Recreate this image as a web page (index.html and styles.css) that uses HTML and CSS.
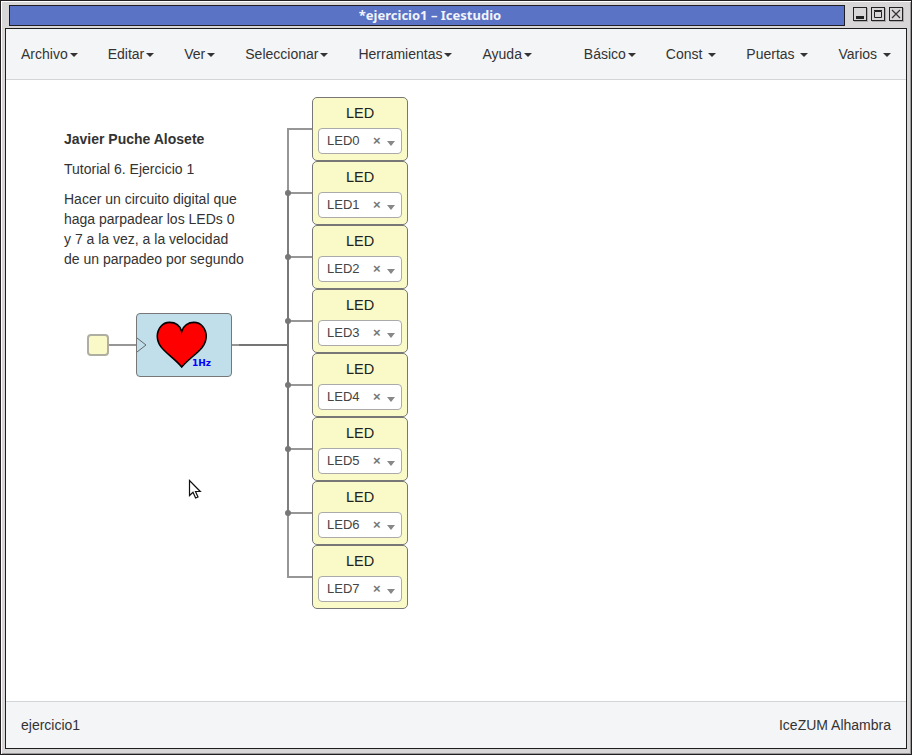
FILE: index.html
```html
<!DOCTYPE html>
<html lang="es">
<head>
<meta charset="utf-8">
<title>*ejercicio1 – Icestudio</title>
<link rel="stylesheet" href="styles.css">
</head>
<body>
<div class="window">
  <header class="titlebar">
    <div class="title">*ejercicio1 – Icestudio</div>
    <div class="controls">
      <svg class="control" viewBox="0 0 14 14"><path d="M3 9h8v3H3z" fill="#222"/></svg>
      <svg class="control" viewBox="0 0 14 14"><path d="M3.5 4.5h7v6h-7zM3 3.5h8" fill="none" stroke="#222"/></svg>
      <svg class="control" viewBox="0 0 14 14"><path d="M3 3l8 8M11 3l-8 8" fill="none" stroke="#333" stroke-width="1.2"/></svg>
    </div>
  </header>
  <div class="client">
    <nav class="navbar">
      <div class="menu">
        <a>Archivo<i class="caret"></i></a><a>Editar<i class="caret"></i></a><a>Ver<i class="caret"></i></a><a>Seleccionar<i class="caret"></i></a><a>Herramientas<i class="caret"></i></a><a>Ayuda<i class="caret"></i></a>
      </div>
      <div class="menu">
        <a>Básico<i class="caret"></i></a><a>Const <i class="caret"></i></a><a>Puertas <i class="caret"></i></a><a>Varios <i class="caret"></i></a>
      </div>
    </nav>
    <main class="canvas">
      <svg class="wires" width="900" height="621" viewBox="6 80 900 621">
        <g fill="none" stroke="#777" stroke-width="2" stroke-opacity=".77">
          <path d="M108 345H136M232 345H240"/>
          <path d="M239 345H288V129H312"/>
          <path d="M239 345H288V193H312"/>
          <path d="M239 345H288V257H312"/>
          <path d="M239 345H288V321H312"/>
          <path d="M239 345H288V385H312"/>
          <path d="M239 345H288V449H312"/>
          <path d="M239 345H288V513H312"/>
          <path d="M239 345H288V577H312"/>
        </g>
        <g fill="#777">
          <circle cx="288" cy="193" r="3"/><circle cx="288" cy="257" r="3"/><circle cx="288" cy="321" r="3"/><circle cx="288" cy="385" r="3"/><circle cx="288" cy="449" r="3"/><circle cx="288" cy="513" r="3"/>
        </g>
      </svg>
      <div class="note">
        <p><strong>Javier Puche Alosete</strong></p>
        <p>Tutorial 6. Ejercicio 1</p>
        <p>Hacer un circuito digital que haga parpadear los LEDs 0 y 7 a la vez, a la velocidad de un parpadeo por segundo</p>
      </div>
      <div class="clock-input"></div>
      <div class="heart">
        <svg width="94" height="62" viewBox="137 314 94 62">
          <path d="M137 338L146 345L137 352" fill="none" stroke="#666"/>
          <path d="M181.7 331.5C180 325.5 175 322.4 169.5 322.4C162.5 322.4 157.3 328.5 157.3 336.5C157.3 349 171 354.5 181.7 367C192.5 354.5 206.2 349 206.2 336.5C206.2 328.5 201 322.4 194 322.4C188.5 322.4 183.4 325.5 181.7 331.5Z" fill="#f00" stroke="#000" stroke-width="1.6"/>
          <text class="rate" x="192" y="366">1Hz</text>
        </svg>
      </div>
      <div class="leds">
        <section class="led"><h3>LED</h3><div class="select"><span>LED0</span><b>×</b><i></i></div></section>
        <section class="led"><h3>LED</h3><div class="select"><span>LED1</span><b>×</b><i></i></div></section>
        <section class="led"><h3>LED</h3><div class="select"><span>LED2</span><b>×</b><i></i></div></section>
        <section class="led"><h3>LED</h3><div class="select"><span>LED3</span><b>×</b><i></i></div></section>
        <section class="led"><h3>LED</h3><div class="select"><span>LED4</span><b>×</b><i></i></div></section>
        <section class="led"><h3>LED</h3><div class="select"><span>LED5</span><b>×</b><i></i></div></section>
        <section class="led"><h3>LED</h3><div class="select"><span>LED6</span><b>×</b><i></i></div></section>
        <section class="led"><h3>LED</h3><div class="select"><span>LED7</span><b>×</b><i></i></div></section>
      </div>
      <svg class="pointer" width="14" height="21" viewBox="0 0 14 21"><path d="M1.5 1.5V16.5L5 13.2L7.6 19L10 18L7.5 12.5H12.3Z" fill="#fff" stroke="#111" stroke-width="1.2"/></svg>
    </main>
    <footer class="footer"><span>ejercicio1</span><span>IceZUM Alhambra</span></footer>
  </div>
</div>
</body>
</html>
```
FILE: styles.css
```css
* { box-sizing: border-box; }
body {
  margin: 0;
  font: 14px/20px "Liberation Sans", Arial, sans-serif;
  color: #333;
}
.window {
  display: flex;
  flex-direction: column;
  width: 912px;
  height: 755px;
  padding: 4px 3px 4px 4px;
  border: 1px solid #241f22;
  background: #d8d6d6;
  box-shadow: inset 1px 1px #fff, inset -1px -1px #999;
}
.titlebar {
  display: flex;
  flex: 0 0 23px;
  padding-left: 4px;
}
.title {
  width: 836px;
  height: 21px;
  border: 1px solid #1e1e24;
  background: #5a73c5;
  color: #f2f4fb;
  font: bold 13px/19px "Noto Sans", sans-serif;
  text-align: center;
  padding-left: 6px;
}
.controls {
  display: flex;
  gap: 4px;
  padding: 2px 0 0 8px;
}
.control {
  width: 14px;
  height: 14px;
  outline: 1px solid #222;
  outline-offset: -1px;
  box-shadow: 1px 1px #aaa;
}
.client {
  display: flex;
  flex-direction: column;
  width: 902px;
  height: 721px;
  border: 1px solid #1e1e1e;
  background: #fff;
}
.navbar {
  display: flex;
  justify-content: space-between;
  flex: 0 0 51px;
  background: #f4f5f7;
  border-bottom: 1px solid #d3d6d9;
}
.menu { display: flex; }
.menu a { padding: 15px; white-space: pre; }
.caret {
  display: inline-block;
  margin-left: 2px;
  vertical-align: middle;
  border-top: 4px solid;
  border-left: 4px solid transparent;
  border-right: 4px solid transparent;
}
.canvas { position: relative; flex: 1; }
.wires { position: absolute; left: 0; top: 0; }
.note { position: absolute; left: 58px; top: 49px; width: 180px; }
.note p { margin: 0 0 10px; }
.clock-input {
  position: absolute;
  left: 81px;
  top: 254px;
  width: 22px;
  height: 22px;
  border: 2px solid #aeaea2;
  border-radius: 4px;
  background: #fafac8;
}
.heart {
  position: absolute;
  left: 130px;
  top: 233px;
  width: 96px;
  height: 64px;
  border: 1px solid #777;
  border-radius: 4px;
  background: #c0dfeb;
}
.heart svg { display: block; }
.rate { font: bold 9px "DejaVu Sans", sans-serif; fill: #00f; }
.leds { position: absolute; left: 306px; top: 17px; width: 96px; }
.led {
  height: 64px;
  padding: 5px;
  border: 1px solid #777;
  border-radius: 5px;
  background: #fafac8;
}
.led h3 {
  margin: 0 0 5px;
  color: #222;
  font-size: 14.5px;
  font-weight: normal;
  line-height: 20px;
  text-align: center;
}
.select {
  display: flex;
  align-items: center;
  height: 26px;
  padding: 0 6px 0 8px;
  border: 1px solid #aaa;
  border-radius: 4px;
  background: #fff;
  color: #444;
  font-size: 13px;
  line-height: 24px;
}
.select span { width: 46px; }
.select b { width: 14px; color: #777; }
.select i {
  margin-top: 4px;
  border-top: 5px solid #888;
  border-left: 4px solid transparent;
  border-right: 4px solid transparent;
}
.pointer { position: absolute; left: 182px; top: 399px; }
.footer {
  display: flex;
  justify-content: space-between;
  flex: 0 0 47px;
  padding: 13px 15px;
  border-top: 1px solid #d3d6d9;
  background: #f4f5f7;
}
```
